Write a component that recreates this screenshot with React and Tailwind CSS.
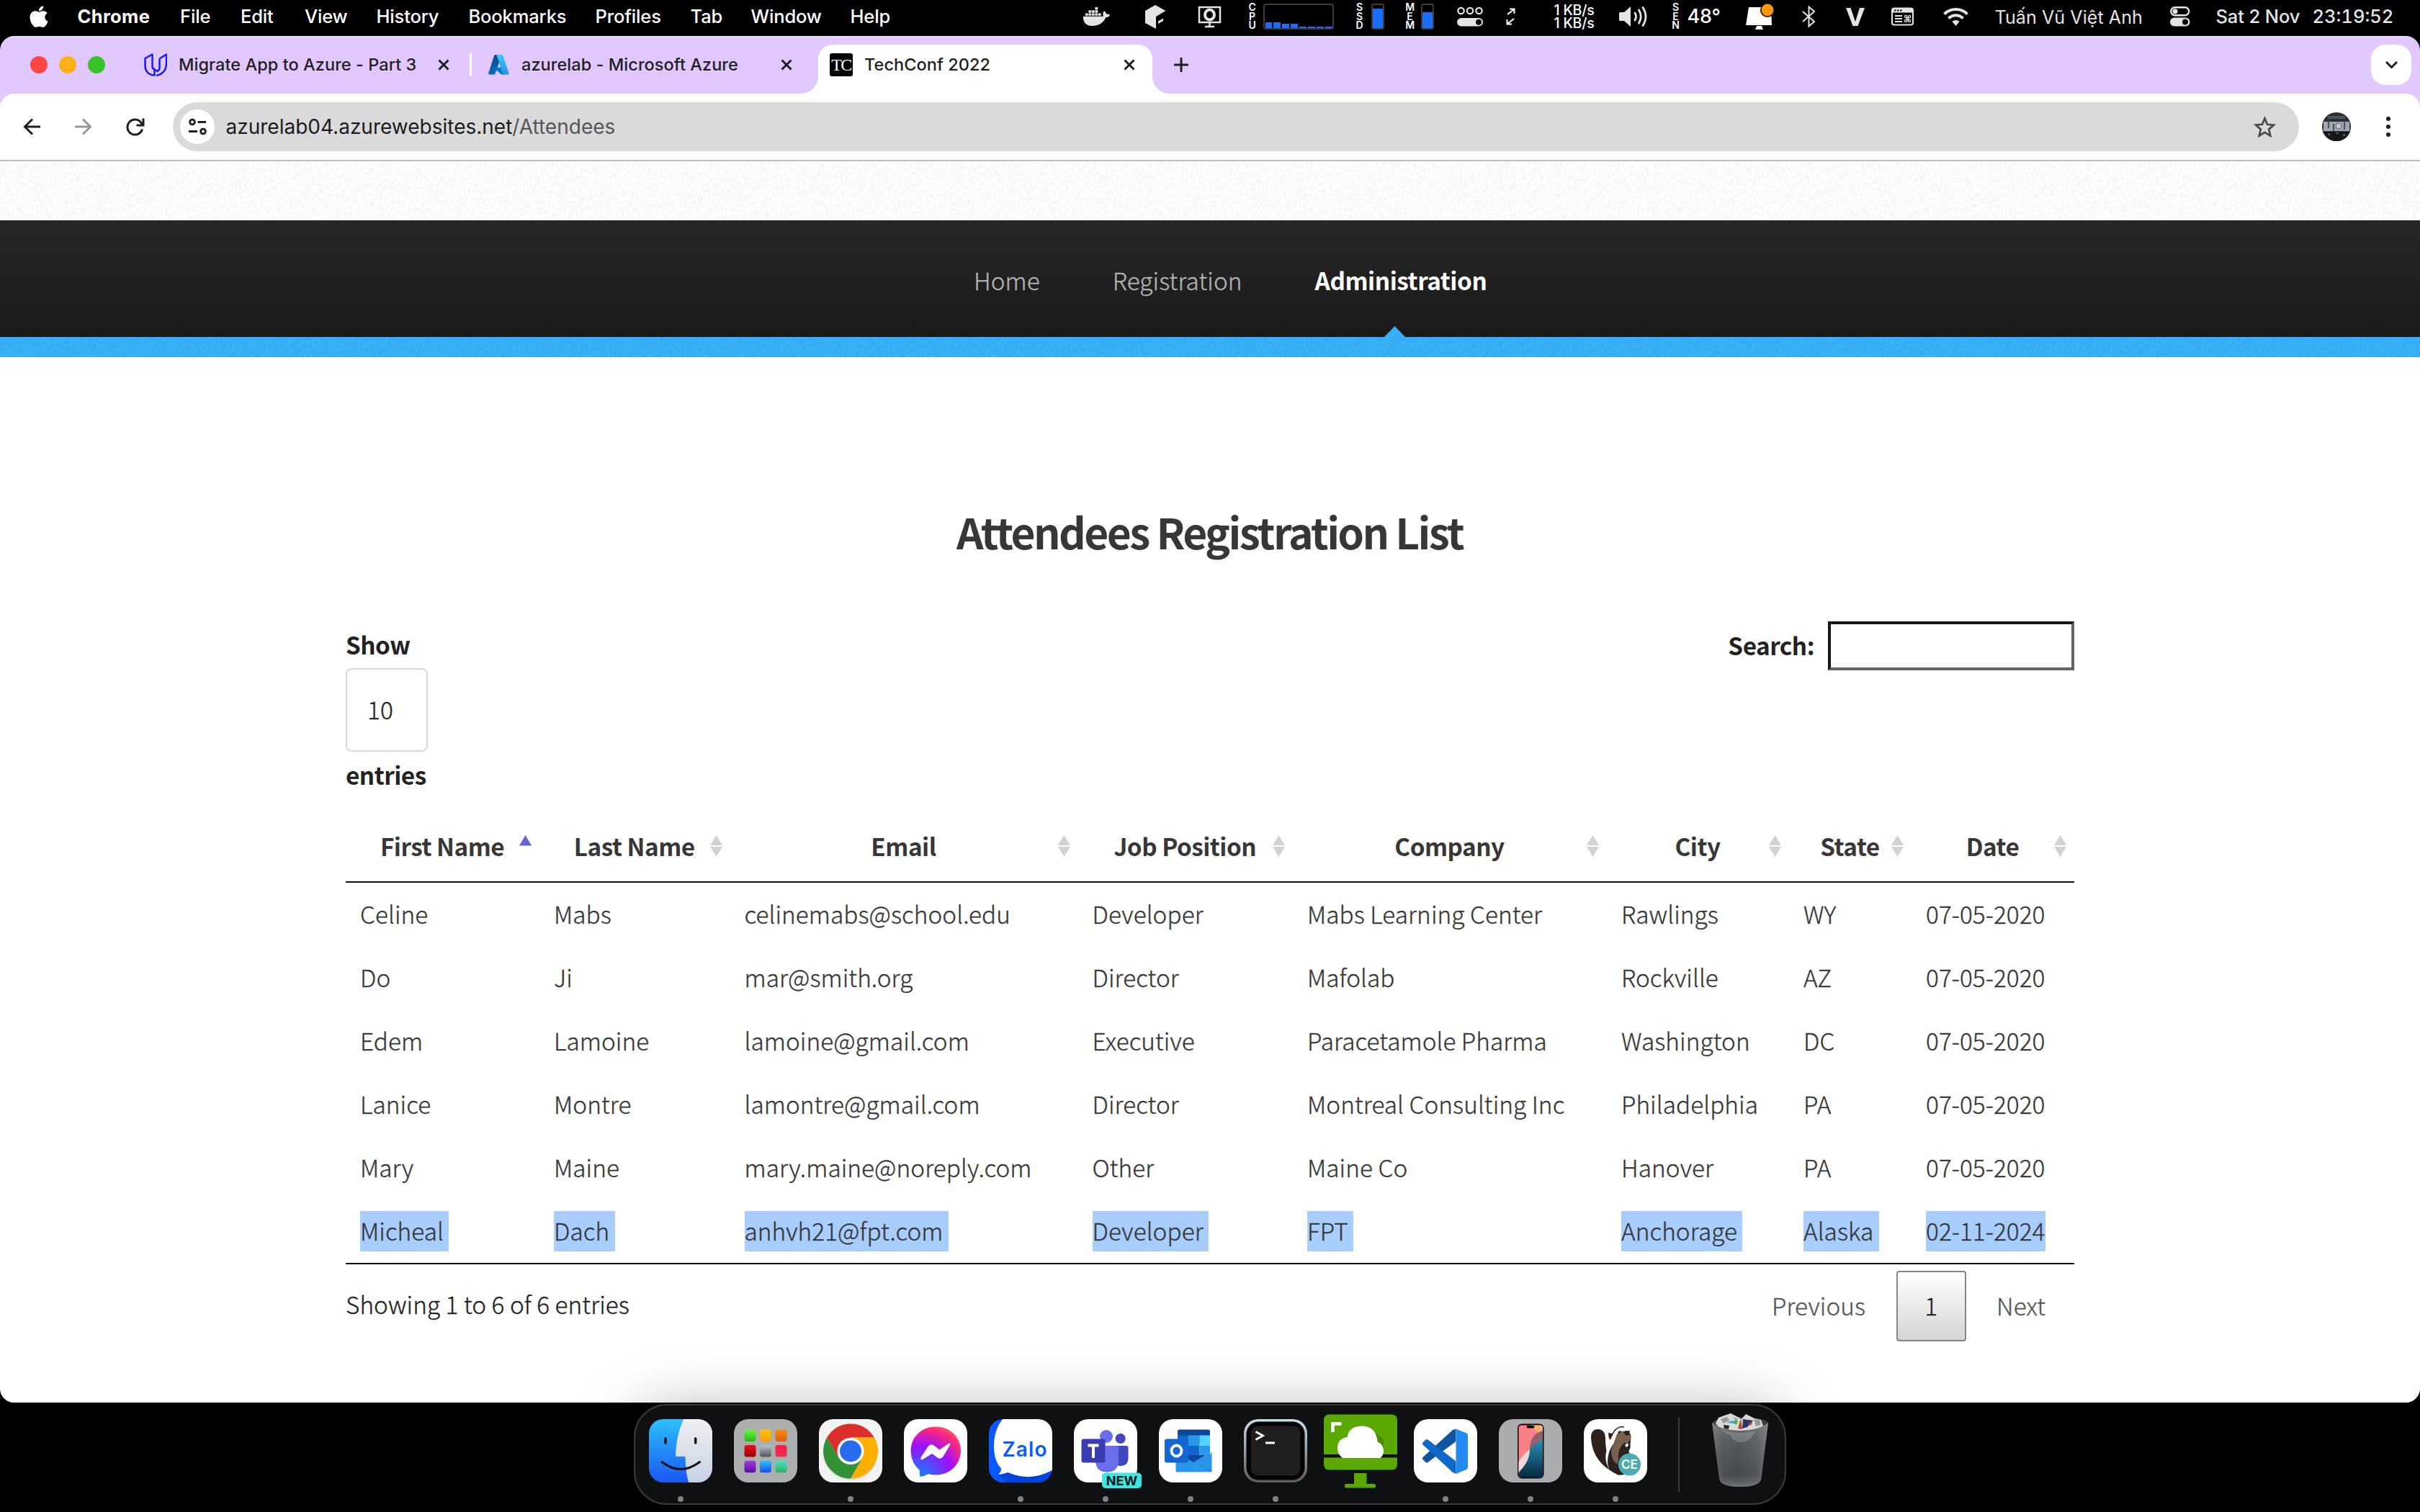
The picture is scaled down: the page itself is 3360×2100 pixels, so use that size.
import { FaApple, FaDocker } from "react-icons/fa";

const COLS = "grid grid-cols-[269px_264.5px_483px_298.5px_436px_253px_170px_226px]";

const columns = ["First Name", "Last Name", "Email", "Job Position", "Company", "City", "State", "Date"];

const rows = [
  ["Celine", "Mabs", "celinemabs@school.edu", "Developer", "Mabs Learning Center", "Rawlings", "WY", "07-05-2020"],
  ["Do", "Ji", "mar@smith.org", "Director", "Mafolab", "Rockville", "AZ", "07-05-2020"],
  ["Edem", "Lamoine", "lamoine@gmail.com", "Executive", "Paracetamole Pharma", "Washington", "DC", "07-05-2020"],
  ["Lanice", "Montre", "lamontre@gmail.com", "Director", "Montreal Consulting Inc", "Philadelphia", "PA", "07-05-2020"],
  ["Mary", "Maine", "mary.maine@noreply.com", "Other", "Maine Co", "Hanover", "PA", "07-05-2020"],
  ["Micheal", "Dach", "anhvh21@fpt.com", "Developer", "FPT", "Anchorage", "Alaska", "02-11-2024"],
];

/* ---------- macOS menu bar ---------- */

function Stacked({ text, className }) {
  return (
    <span className={`flex w-[12px] flex-col items-center text-[14px] leading-[12.5px] font-semibold ${className}`}>
      {text.split("").map((c, i) => (
        <span key={i}>{c}</span>
      ))}
    </span>
  );
}

function Gauge({ level, className }) {
  return (
    <span className={`flex h-[36px] w-[18px] flex-col justify-end rounded-[3px] border-2 border-[#3c3c3e] ${className}`}>
      <span className="block w-full bg-[#1a6dff]" style={{ height: level }} />
    </span>
  );
}

function MenuBar() {
  return (
    <div className="flex h-[50px] shrink-0 items-center bg-black pb-[4px] text-[25.5px] leading-[46px] font-medium tracking-[-0.15px] whitespace-nowrap text-white">
      <FaApple className="ml-[39px] h-[34px] w-[30px]" />
      <span className="ml-[38.5px] w-[142.5px] font-bold tracking-[0.35px]">Chrome</span>
      <span className="w-[84px]">File</span>
      <span className="w-[89px]">Edit</span>
      <span className="w-[99.5px]">View</span>
      <span className="w-[128px]">History</span>
      <span className="w-[176px]">Bookmarks</span>
      <span className="w-[132px]">Profiles</span>
      <span className="w-[84px]">Tab</span>
      <span className="w-[138px]">Window</span>
      <span className="w-[323px]">Help</span>
      <FaDocker className="h-[36px] w-[37px] text-[#e4e4e4]" />
      <svg className="ml-[49px] h-[33px] w-[29px]" viewBox="0 0 29 33">
        <path fill="#e4e4e4" d="M0 8 14 0l14.500 8-13.500 8v17L0 25zM18 26v-3.500l7-4V22z" />
      </svg>
      <svg className="ml-[44px] h-[31px] w-[34px]" viewBox="0 0 34 31" fill="none" stroke="#e4e4e4">
        <path strokeWidth="2.500" d="M2 2h29v21H2zM10 29h13M16.500 23v6" />
        <ellipse cx="16.500" cy="12.500" rx="6.500" ry="7" strokeWidth="4" />
      </svg>
      <Stacked text="CPU" className="ml-[36px]" />
      <span className="ml-[9px] flex h-[36px] w-[98px] items-end gap-[2px] rounded-[4px] border-2 border-[#3c3c3e] pl-px">
        {[8, 8, 6, 6, 2, 2, 2, 2].map((h, i) => (
          <span key={i} className="block w-[10px] bg-[#1a6dff]" style={{ height: h }} />
        ))}
      </span>
      <Stacked text="SSD" className="ml-[30px]" />
      <Gauge level={27} className="ml-[10px]" />
      <Stacked text="MEM" className="ml-[30px]" />
      <Gauge level={22} className="ml-[9px]" />
      <svg className="ml-[32px] h-[28px] w-[37px]" viewBox="0 0 37 28">
        <g fill="none" stroke="#e4e4e4" strokeWidth="2.200">
          <circle cx="5.500" cy="6" r="4.200" />
          <circle cx="18" cy="6" r="4.200" />
          <circle cx="30.500" cy="6" r="4.200" />
        </g>
        <rect y="16" width="36" height="11.500" rx="5.700" fill="#e4e4e4" />
        <circle cx="30" cy="21.700" r="4" fill="#000" />
      </svg>
      <svg className="ml-[31px] h-[24px] w-[13px]" viewBox="0 0 13 24" fill="none" stroke="#fff" strokeWidth="2">
        <path d="M2 9 11 2M5 1.500h6.500V8M11 15l-9 7M8 22.500H1.500V16" />
      </svg>
      <span className="ml-[54px] flex w-[90px] flex-col text-[19.500px] leading-[18px] tracking-[-0.2px]">
        <span>1 KB/s</span>
        <span>1 KB/s</span>
      </span>
      <svg className="h-[30px] w-[41px]" viewBox="0 0 41 30">
        <path fill="#e4e4e4" d="M0 10.500Q0 9 1.500 9H7l9-8v28l-9-8H1.500Q0 21 0 19.500z" />
        <path fill="none" stroke="#e4e4e4" strokeWidth="2.800" strokeLinecap="round" d="M22 10q3 5 0 10M27.500 6q5.500 9 0 18M33 2.500q8 12.500 0 25" />
      </svg>
      <Stacked text="SEN" className="ml-[32px]" />
      <span className="ml-[10px] w-[81px] text-[27px]">48°</span>
      <svg className="h-[36px] w-[40px]" viewBox="0 0 40 36">
        <path fill="#fff" d="M4 5h31l1 25H0zM15 31h7l2 5H13z" />
        <circle cx="30" cy="9" r="10" fill="#000" />
        <circle cx="30" cy="9" r="8.500" fill="#ff9500" />
      </svg>
      <svg className="ml-[38px] h-[30px] w-[19px]" viewBox="0 0 19 30" fill="none" stroke="#e4e4e4" strokeWidth="2">
        <path d="M1 8l16 14-7.500 6.500V1.500L17 8 1 22" />
      </svg>
      <svg className="ml-[42px] h-[26px] w-[26px]" viewBox="0 0 26 26">
        <path fill="#e4e4e4" d="M0 1h6.500L13 20 19 1h7l-9.500 25h-7z" />
      </svg>
      <svg className="ml-[37px] h-[26px] w-[32px]" viewBox="0 0 32 26">
        <rect x="1" y="1.500" width="29" height="23" rx="3" fill="none" stroke="#e4e4e4" strokeWidth="2" />
        <path fill="#e4e4e4" d="M1 2h29v5.500H1z" />
        <path stroke="#000" strokeWidth="2" strokeDasharray="2.500 1.500" d="M4 4.500h11" />
        <path stroke="#e4e4e4" strokeWidth="2" d="M5 12h10M5 16h10M5 20h10" />
        <g fill="none" stroke="#e4e4e4" strokeWidth="1.300">
          <circle cx="20" cy="13" r="1.600" />
          <circle cx="25" cy="13" r="1.600" />
          <circle cx="20" cy="19" r="1.600" />
          <circle cx="25" cy="19" r="1.600" />
          <path d="M21.500 13v6M23.500 13v6M20 14.600h5M20 17.400h5" />
        </g>
      </svg>
      <svg className="ml-[40px] h-[26px] w-[35px]" viewBox="0 0 35 26">
        <g fill="none" stroke="#e4e4e4" strokeWidth="4">
          <path d="M1.500 9.500a23 23 0 0 1 32 0" />
          <path d="M7.500 15.500a14 14 0 0 1 20 0" />
        </g>
        <path fill="#e4e4e4" d="M17.500 26l-5-6a7 7 0 0 1 10 0z" />
      </svg>
      <span className="ml-[37px] w-[243px] pt-[2px] text-[25px] font-normal tracking-[0.1px] text-[#e4e4e4]">Tuấn Vũ Việt Anh</span>
      <svg className="h-[28px] w-[28px]" viewBox="0 0 28 28">
        <rect x="1.200" y="1.200" width="25" height="11" rx="5.500" fill="none" stroke="#e4e4e4" strokeWidth="2.400" />
        <circle cx="7" cy="6.700" r="3.500" fill="#e4e4e4" />
        <rect y="15.500" width="27.500" height="12" rx="6" fill="#e4e4e4" />
        <circle cx="21" cy="21.500" r="4" fill="#000" />
      </svg>
      <span className="ml-[36px] w-[134px] tracking-[-0.1px] text-[#e4e4e4]">Sat 2 Nov</span>
      <span className="tracking-[0px] text-[#e4e4e4] tabular-nums">23:19:52</span>
    </div>
  );
}

/* ---------- Browser chrome ---------- */

function Cross({ className }) {
  return (
    <svg className={`h-[16px] w-[16px] ${className ?? ""}`} viewBox="0 0 16 16" fill="none" stroke="#1f1f1f" strokeWidth="3">
      <path d="M1.500 1.500l13 13M14.500 1.500l-13 13" />
    </svg>
  );
}

function TabStrip() {
  return (
    <div className="flex h-[80px] items-center border-t-2 border-[#ecdcff] pb-[2px] text-[23.5px] font-medium tracking-[0.05px] whitespace-nowrap text-[#1f1f1f]">
      <span className="ml-[42px] h-[24px] w-[24px] rounded-full bg-[#fc4645]" />
      <span className="ml-[16px] h-[24px] w-[24px] rounded-full bg-[#fdb018]" />
      <span className="ml-[16px] h-[24px] w-[24px] rounded-full bg-[#37c42a]" />
      <svg className="ml-[54px] h-[32px] w-[32px]" viewBox="0 0 32 32" fill="none" stroke="#1414ff" strokeWidth="2.400" strokeLinejoin="round">
        <path d="M11 2v17q0 3 3 3.500v8.500Q1 30 1 17V7.500z" transform="translate(.5 -.5)" />
        <path d="M21.500 7.500 31 1.500V14q0 14-14 17M21.500 7.500V20q0 3.500-3 5l-4-2.500" />
      </svg>
      <span className="ml-[16px] w-[360px]">Migrate App to Azure - Part 3</span>
      <Cross />
      <span className="ml-[28px] h-[32px] w-[3px] bg-white" />
      <svg className="ml-[23px] h-[28px] w-[29px]" viewBox="0 0 29 28">
        <defs>
          <linearGradient id="azL" x1="0" y1="0" x2="0" y2="1">
            <stop offset="0" stopColor="#114a8b" />
            <stop offset="1" stopColor="#0669bc" />
          </linearGradient>
          <linearGradient id="azR" x1="0" y1="0" x2="0" y2="1">
            <stop offset="0" stopColor="#3ccbf4" />
            <stop offset="1" stopColor="#2892df" />
          </linearGradient>
        </defs>
        <path fill="url(#azL)" d="M9.500 0H19L9 27.500H1.500Q-.300 27 .200 25.500L8.200 1z" />
        <path fill="#0078d4" d="M9 17.500h13l1 10h-4.500L8 19z" />
        <path fill="url(#azR)" d="M10.500 0h8q1.300 0 1.800 1.200l8.200 24.600q.300 1.500-1.400 1.700H18q2-.5 1.500-2.200L11.800 1Q11.300 0 10.500 0z" />
      </svg>
      <span className="ml-[17px] w-[360px]">azurelab - Microsoft Azure</span>
      <Cross />
      <div className="relative -mb-[2px] ml-[36px] flex h-[68px] w-[464px] items-center self-end rounded-t-[20px] bg-white pb-[12px] pl-[16px]">
        <svg className="absolute bottom-0 -left-[24px] h-[24px] w-[24px]" viewBox="0 0 24 24">
          <path fill="#fff" d="M24 0v24H0A24 24 0 0 0 24 0z" />
        </svg>
        <svg className="absolute -right-[24px] bottom-0 h-[24px] w-[24px]" viewBox="0 0 24 24">
          <path fill="#fff" d="M0 0v24h24A24 24 0 0 1 0 0z" />
        </svg>
        <span className="flex h-[32px] w-[32px] items-center justify-center rounded-[3px] bg-black font-['Liberation_Serif'] text-[24px] leading-none tracking-[-1.500px] text-white">
          TC
        </span>
        <span className="ml-[16px] w-[360px]">TechConf 2022</span>
        <Cross />
      </div>
      <svg className="ml-[30px] h-[20px] w-[20px]" viewBox="0 0 20 20" stroke="#1f1f1f" strokeWidth="3">
        <path d="M10 0v20M0 10h20" />
      </svg>
      <span className="mr-[12px] ml-auto flex h-[56px] w-[56px] items-center justify-center rounded-[20px] bg-white">
        <svg className="h-[10px] w-[17px]" viewBox="0 0 17 10" fill="none" stroke="#1f1f1f" strokeWidth="3">
          <path d="M1 1l7.500 7.500L16 1" />
        </svg>
      </span>
    </div>
  );
}

function Toolbar() {
  return (
    <div className="flex h-[94px] items-center rounded-t-[20px] border-b-2 border-[#bdbdbd] bg-white">
      <svg className="ml-[32px] h-[24px] w-[24px]" viewBox="0 0 24 24" fill="none" stroke="#1f1f1f" strokeWidth="3">
        <path d="M24 12H3M13 1.500 2.500 12 13 22.500" />
      </svg>
      <svg className="ml-[48px] h-[24px] w-[24px]" viewBox="0 0 24 24" fill="none" stroke="#979797" strokeWidth="3">
        <path d="M0 12h21M11 1.500 21.500 12 11 22.500" />
      </svg>
      <svg className="ml-[47px] h-[25px] w-[26px]" viewBox="0 0 26 25" fill="none" stroke="#1f1f1f" strokeWidth="3">
        <path d="M22.500 15.500A10.500 10.500 0 1 1 21 6.500l2.500 2.500M24 .5V10h-9.500" />
      </svg>
      <div className="ml-[39px] flex h-[68px] w-[2952px] items-center rounded-full bg-[#dadada] pl-[10px] text-[28px] whitespace-nowrap text-[#1b1c1f]">
        <span className="flex h-[48px] w-[48px] items-center justify-center rounded-full bg-white">
          <svg className="h-[24px] w-[25px]" viewBox="0 0 25 24" fill="none" stroke="#1f1f1f" strokeWidth="2.800">
            <circle cx="5" cy="5.500" r="3.400" />
            <path d="M12.500 5.500H24M0 18.500h12" />
            <circle cx="20" cy="18.500" r="3.400" />
          </svg>
        </span>
        <span className="ml-[15.500px]">azurelab04.azurewebsites.net</span>
        <span className="text-[#55565a]">/Attendees</span>
        <svg className="mr-[32px] ml-auto h-[30px] w-[31px]" viewBox="0 0 31 30" fill="none" stroke="#4a4c50" strokeWidth="2.800">
          <path d="M15.500 3.500l3.500 8.300 9 .8-6.800 6 2 8.900-7.700-4.700-7.700 4.700 2-8.900-6.800-6 9-.8z" />
        </svg>
      </div>
      <svg className="ml-[32px] h-[40px] w-[40px]" viewBox="0 0 40 40">
        <defs>
          <clipPath id="avatarClip">
            <circle cx="20" cy="20" r="20" />
          </clipPath>
        </defs>
        <g clipPath="url(#avatarClip)">
          <path fill="#2b3036" d="M0 0h40v40H0z" />
          <path fill="#4c545c" d="M8 5h24v4H8z" />
          <path fill="#a0a6b0" d="M2 13h36v13H2z" />
          <path fill="#4a4f58" d="M8 12h2v10H8zM15 16h2v12h-2zM30 12h2v12h-2z" />
          <circle cx="23" cy="19" r="4" fill="#c5c8d0" stroke="#656b76" />
          <path fill="#14171a" d="M0 27h40v13H0z" />
          <path fill="#50565c" d="M8 29h3v3H8zM19 28h4v2h-4zM29 30h3v3h-3z" />
        </g>
      </svg>
      <svg className="ml-[49px] h-[28px] w-[6px]" viewBox="0 0 6 28" fill="#1f1f1f">
        <circle cx="3" cy="3" r="3" />
        <circle cx="3" cy="14" r="3" />
        <circle cx="3" cy="25" r="3" />
      </svg>
    </div>
  );
}

/* ---------- Page ---------- */

function Grain({ id, className }) {
  return (
    <svg className={`absolute inset-0 h-full w-full ${className}`}>
      <filter id={id} x="0" y="0" width="100%" height="100%">
        <feTurbulence type="fractalNoise" baseFrequency="0.3 0.2" numOctaves="3" />
        <feColorMatrix values="0 0 0 0 0  0 0 0 0 0  0 0 0 0 0  1.4 0 0 0 -0.4" />
      </filter>
      <rect width="100%" height="100%" filter={`url(#${id})`} />
    </svg>
  );
}

function SortIcon({ active }) {
  if (active) {
    return (
      <svg className="h-[30px] w-[17px]" viewBox="0 0 17 30">
        <path fill="#6366d8" d="M8.500 0 17 14.500H0z" />
      </svg>
    );
  }
  return (
    <svg className="h-[30px] w-[17px]" viewBox="0 0 17 30" fill="#d2d2d2">
      <path d="M8.500 0 17 14H0zM0 16h17L8.500 30z" />
    </svg>
  );
}

const LIGHT = "font-light tracking-[0.08px] [-webkit-text-stroke:0.35px_currentColor]";

function Page() {
  return (
    <div className="flex-1 bg-white font-['Noto_Sans_CJK_JP','Noto_Sans',sans-serif] text-[33.3px] whitespace-nowrap text-[#373737]">
      <div className="relative h-[82px] bg-white">
        <Grain id="grainTop" className="opacity-[0.055]" />
      </div>
      <nav className="flex h-[162px] items-stretch bg-linear-to-b from-[#272727] to-[#1a1a1a] pl-[1352px] leading-[165px] text-[#b3b3b3]">
        <a className={LIGHT}>Home</a>
        <a className={`ml-[101px] ${LIGHT}`}>Registration</a>
        <a className="relative ml-[101px] font-bold tracking-[-0.45px] text-white">
          Administration
          <svg className="absolute bottom-0 left-[96px] h-[15px] w-[29px]" viewBox="0 0 29 15">
            <path fill="#38aff8" d="M14.500 0 29 15H0z" />
          </svg>
        </a>
      </nav>
      <div className="relative h-[28px] bg-[#3ab2fb]">
        <Grain id="grainBlue" className="opacity-[0.07]" />
      </div>

      <main className="mx-auto w-[2400px]">
        <h2 className="pt-[202px] pr-px text-center text-[58.7px] leading-[80px] font-bold tracking-[-2.6px]">Attendees Registration List</h2>

        <div className="mt-[85px] flex justify-between font-bold tracking-[-0.5px] text-[#222]">
          <div className="flex flex-col items-start leading-[63px]">
            <span className="h-[65px]">Show</span>
            <span className={`h-[116px] w-[114px] rounded-[8px] border-2 border-[#d9d9d9] pl-[28px] leading-[109px] text-[#222] ${LIGHT}`}>10</span>
            <span>entries</span>
          </div>
          <div className="flex h-[68px] leading-[65px]">
            <span>Search:</span>
            <span className="ml-[19px] h-[68px] w-[342px] border-4 border-t-[#171717] border-r-[#636363] border-b-[#636363] border-l-[#171717] bg-white" />
          </div>
        </div>

        <div className={`${COLS} h-[119px] border-b-2 border-[#111] pt-[19px]`}>
          {columns.map((c, i) => (
            <div key={c} className="flex items-center pr-[11px] pl-[27px]">
              <span className="flex-1 text-center leading-[98px] font-bold tracking-[-0.5px]">{c}</span>
              <SortIcon active={i === 0} />
            </div>
          ))}
        </div>

        <div className={`border-b-2 border-[#111] ${LIGHT}`}>
          {rows.map((r, ri) => (
            <div key={r[0]} className={`${COLS} h-[88px] items-center`}>
              {r.map((v, i) => (
                <div key={i} className="pl-[20px]">
                  <span
                    className={`inline-block h-[56px] align-top leading-[53px] ${ri === 5 ? "bg-[#a8cdff]" : ""} ${ri === 5 && i < 7 ? "pr-[7.500px]" : ""}`}
                  >
                    {v}
                  </span>
                </div>
              ))}
            </div>
          ))}
        </div>

        <div className={`mt-[9px] flex h-[98px] text-[#222] ${LIGHT}`}>
          <span className="leading-[91px]">Showing 1 to 6 of 6 entries</span>
          <div className="mr-[40px] ml-auto flex leading-[95px] text-[#555]">
            <span>Previous</span>
            <span className="ml-[43px] h-[98px] w-[97px] rounded-[4px] border-2 border-[#868686] bg-linear-to-b from-white to-[#d5d5d5] pr-px text-center leading-[91px] text-[#222]">
              1
            </span>
            <span className="ml-[42px]">Next</span>
          </div>
        </div>
      </main>
    </div>
  );
}

/* ---------- Dock ---------- */

function Tile({ fill = "#fff" }) {
  return <rect x="0" y="0" width="88" height="88" rx="20" fill={fill} />;
}

function Finder() {
  return (
    <>
      <defs>
        <linearGradient id="fiB" x1="0" y1="0" x2="0" y2="1">
          <stop offset="0" stopColor="#2cc0fd" />
          <stop offset="1" stopColor="#1a57f2" />
        </linearGradient>
        <linearGradient id="fiW" x1="0" y1="0" x2="0" y2="1">
          <stop offset="0" stopColor="#f0eff1" />
          <stop offset="1" stopColor="#c6d2e4" />
        </linearGradient>
      </defs>
      <Tile fill="url(#fiB)" />
      <path fill="url(#fiW)" d="M48 0h20a20 20 0 0 1 20 20v48a20 20 0 0 1-20 20H55q-4-13-4.500-36H39q-2 0-2-2.500Q38 22 48 0z" />
      <g fill="none" stroke="#101010" strokeLinecap="round">
        <path strokeWidth="3.500" d="M23 27v6M64.700 27v6" />
        <path strokeWidth="3" d="M18 59.500q26 20 52.500 0" />
      </g>
    </>
  );
}

const launchpadColors = [
  ["#6cf84a", "#27b80c"],
  ["#fdc60c", "#f89c08"],
  ["#f68f0a", "#e05c12"],
  ["#ea0d1a", "#930404"],
  ["#b4c4cc", "#555"],
  ["#fb1a44", "#ea3454"],
  ["#a63ce0", "#5b0f9e"],
  ["#2cc4fc", "#174cf0"],
  ["#58dcc8", "#2cb060"],
];

function Launchpad() {
  return (
    <>
      <Tile fill="#adaeb0" />
      {launchpadColors.map(([a, b], i) => (
        <g key={a}>
          <linearGradient id={`lp${i}`} x1="0" y1="0" x2="0" y2="1">
            <stop offset="0" stopColor={a} />
            <stop offset="1" stopColor={b} />
          </linearGradient>
          <rect x={14.500 + (i % 3) * 21.500} y={14.500 + Math.floor(i / 3) * 21.600} width="16" height="16.500" rx="3.500" fill={`url(#lp${i})`} />
        </g>
      ))}
    </>
  );
}

function ChromeIcon() {
  return (
    <>
      <Tile fill="#f3f3f3" />
      <ellipse cx="44" cy="49" rx="37" ry="36" fill="#000" opacity=".1" />
      <g transform="translate(44 44.500)">
        <path fill="#dc2e2b" d="M32.900-19H0L-16.450 9.500-32.900-19A38 38 0 0 1 32.900-19z" />
        <path fill="#329238" d="M-32.900-19-16.450 9.500 16.450 9.500 0 38A38 38 0 0 1-32.900-19z" />
        <path fill="#f9b000" d="M0 38 16.450 9.500 0-19H32.900A38 38 0 0 1 0 38z" />
        <circle r="18.600" fill="#fff" />
        <circle r="15" fill="#2a6cf0" />
      </g>
    </>
  );
}

function Messenger() {
  return (
    <>
      <radialGradient id="msg" cx=".2" cy="1" r="1.150">
        <stop offset="0" stopColor="#0a84ff" />
        <stop offset=".55" stopColor="#a10eff" />
        <stop offset=".85" stopColor="#ff2a78" />
        <stop offset="1" stopColor="#ff6a58" />
      </radialGradient>
      <Tile />
      <path fill="url(#msg)" d="M44.300 10.500c20 0 34.700 14.500 34.700 33.300S64.300 77.500 44.300 77.500q-5.500 0-10-1.300l-9.300 3.500q-2.700.8-3-2l-.3-7C14 64.500 9.600 55 9.600 43.800 9.600 25 24.300 10.500 44.300 10.500z" />
      <path fill="#fff" d="M23.500 53.500 33.500 38q3.500-4.500 8-1.500l8 6 12.500-8.500q3-1.500 2.200 1.500L54.500 52q-3.500 4.500-8 1.500L39 48l-13 8q-3.500 1-2.500-2.500z" />
    </>
  );
}

function Zalo() {
  return (
    <>
      <clipPath id="zaClip">
        <rect width="88" height="88" rx="20" />
      </clipPath>
      <g clipPath="url(#zaClip)">
        <path fill="#0a58ff" d="M0 0h88v88H0z" />
        <path fill="#0442e0" d="M14 77 88 62v26H24z" />
        <path fill="#fff" d="M20-1Q7 14 7 38q0 20 10 30.500.5 5-3.500 7.500 0 1.500 7-.3l6-1.700Q58 88 90 70V-1z" />
      </g>
      <text x="18.500" y="52" fontSize="28" fontWeight="600" textLength="62" fill="#0a5cff">
        Zalo
      </text>
    </>
  );
}

function Teams() {
  return (
    <>
      <Tile />
      <circle cx="64.700" cy="27" r="7" fill="#4246c0" />
      <path fill="#4246c0" d="M56 37h17q2.500 0 2.500 2.500V54q0 11-11 11-6 0-8.500-4z" />
      <circle cx="45" cy="24" r="9" fill="#6a6eea" />
      <path fill="#6a6eea" d="M30 37h29.500q2.500 0 2.500 2.500V57q0 16.500-16 16.500T30 57z" />
      <rect x="10.500" y="27.500" width="33" height="33" rx="3" fill="#3a3cb4" />
      <path fill="none" stroke="#fff" strokeWidth="4" d="M19.500 36.500h15M27 36v18" />
      <rect x="39" y="74.500" width="55" height="21.500" rx="5" fill="#3de6e2" />
      <text x="66.500" y="92" fontSize="18" fontWeight="700" textAnchor="middle" fill="#04181a">
        NEW
      </text>
    </>
  );
}

function Outlook() {
  return (
    <>
      <Tile />
      <rect x="26" y="14.500" width="45" height="20" rx="2.500" fill="#0f4699" />
      <path fill="#1263cc" d="M26 22.500h14.500V50H26z" />
      <path fill="#2b97ea" d="M40.500 22.500h16V37h-16z" />
      <path fill="#50d6ff" d="M56.500 22.500H71V37H56.500z" />
      <path fill="#1263cc" d="M40.500 37h16v14h-16z" />
      <path fill="#2b97ea" d="M56.500 37H71v14H56.500z" />
      <path fill="#2a96e8" d="M23.500 50h47.500l2.500-5v26.500q0 2-2 2h-46q-2 0-2-2z" />
      <path fill="#0f4699" d="M32 50h32L48 60z" />
      <path fill="#1d7fdc" d="M47 59 73.500 73.500V72z" />
      <rect x="8" y="27.500" width="33" height="33" rx="3" fill="#1467d2" />
      <ellipse cx="24.500" cy="44" rx="7" ry="7.500" fill="none" stroke="#fff" strokeWidth="3.800" />
    </>
  );
}

function Terminal() {
  return (
    <>
      <linearGradient id="tmF" x1="0" y1="0" x2="0" y2="1">
        <stop offset="0" stopColor="#c6dfe9" />
        <stop offset="1" stopColor="#5c5a5c" />
      </linearGradient>
      <Tile fill="url(#tmF)" />
      <rect x="3.500" y="3.500" width="81" height="81" rx="17" fill="#050203" />
      <rect x="10" y="9.500" width="68.500" height="69" rx="10" fill="#1f1f20" />
      <path fill="none" stroke="#fff" strokeWidth="2.800" d="M16.500 17.500 26.500 23l-10 5.500M30 33h13" />
    </>
  );
}

function RemoteDesktop() {
  return (
    <g transform="translate(-7 -6.500)">
      <path fill="#5aa802" d="M8 0h86q8 0 8 8v47.500H0V8q0-8 8-8zM0 60h102v9q0 8-8 8H8q-8 0-8-8zM42 81.500h17.500V98H42z" />
      <rect x="29" y="96.500" width="43" height="5.500" rx="2" fill="#5aa802" />
      <path fill="#4a8c02" d="M70 24 83 35v14L70 44z" />
      <path fill="none" stroke="#fff" strokeWidth="4.500" d="M12.500 24.500V13h12" />
      <path fill="#fff" d="M26 60.500q-7-5-7-14 0-13 13.500-15Q35 16 53.500 16 73 17 74.500 38q8.500 3.500 8.500 12.500 0 6-4.500 10z" />
    </g>
  );
}

function VSCode() {
  return (
    <>
      <Tile />
      <path fill="#1055a0" d="M58.500 13.500V31L19.500 60q-1.500 1-3 0L12.500 56q-1.500-1.500 0-3L54 15z" />
      <path fill="#1268c8" d="M58.500 76V58.500L19.500 28.500q-1.500-1-3 0L12.500 32.500q-1.500 1.500 0 3L54 74z" />
      <path fill="#2489f0" d="M58.500 13.500 73 19.500q2 1 2 3V67q0 2-2 3L58.500 76z" />
    </>
  );
}

function Phone() {
  return (
    <>
      <defs>
        <linearGradient id="phB" x1="0" y1="0" x2="0" y2="1">
          <stop offset="0" stopColor="#2a92b4" />
          <stop offset="1" stopColor="#042640" />
        </linearGradient>
        <clipPath id="phC">
          <rect x="27.500" y="8.500" width="33.500" height="72.500" rx="4" />
        </clipPath>
      </defs>
      <Tile fill="#abacae" />
      <rect x="26" y="6.500" width="36.500" height="76" rx="6" fill="#070707" />
      <g clipPath="url(#phC)">
        <path fill="#fb7f84" d="M27 8h35v74H27z" />
        <path fill="#fbb070" d="M45 8h17v10Q50 20 45 8z" />
        <path fill="#8c6474" d="M43 42Q43 20 62 16v16z" />
        <path fill="url(#phB)" d="M27 76Q38 60 43 42 50 34 62 28v54H27z" />
        <path fill="#ecd8dc" d="M27 60Q36 46 43 42q0 18-16 32z" />
      </g>
      <rect x="38.500" y="9" width="11" height="3.500" rx="1.700" fill="#000" />
    </>
  );
}

function DBeaver() {
  return (
    <>
      <Tile />
      <path fill="#2c211d" d="M10 26q0-12 9.500-12Q30 14 30 28q0 12 3 22 5 14 16 28Q12 62 10 26z" />
      <path fill="#2c211d" d="M33 50q0-12 6-20l4-8 16-6q6 2 6.500 8l-1 12q1 4-2 8 4 12 2 26-8 10-18 7Q32 70 33 50z" />
      <path fill="#2c211d" d="M34 19l6 1 1 3-6 5z" />
      <path fill="none" stroke="#2c211d" strokeWidth="1.500" d="M37 29Q42 9 56 11M34 44q1-10 7-18" />
      <path fill="#fff" d="M39 24q6-11 16-9-8 2-10 9l-3 9q-9 12-9 26 0 8 5 16Q28 60 31 46z" />
      <path fill="#7a6050" d="M47 19q9-5 17 1l1 7q-3 8-9 6-9 8-8 22l-1 8q-9-6-9-18 1-7 4-11z" />
      <path fill="#2c211d" d="M55 17l9-1-1 6-5 1zM48 20q4-1 4-4l-4 1z" />
      <path fill="#fff" d="M57 36l4-3 1 4-3 2z" />
      <circle cx="63.500" cy="63" r="15.500" fill="#4cacb2" />
      <text x="63.500" y="69" fontSize="17" fontWeight="600" textAnchor="middle" fill="#fff">
        CE
      </text>
    </>
  );
}

function Trash() {
  return (
    <svg className="ml-[45px] h-[102px] w-[78px] -translate-y-[8px] overflow-visible" viewBox="0 0 78 102">
      <defs>
        <linearGradient id="trB" x1="0" y1="0" x2="1" y2="0">
          <stop offset="0" stopColor="#6d7274" />
          <stop offset=".2" stopColor="#55595b" />
          <stop offset=".5" stopColor="#4c5052" />
          <stop offset=".8" stopColor="#5c6062" />
          <stop offset="1" stopColor="#7e8284" />
        </linearGradient>
        <linearGradient id="trS" x1="0" y1="0" x2="0" y2="1">
          <stop offset="0" stopColor="#8c9092" stopOpacity=".55" />
          <stop offset=".3" stopColor="#6a6e70" stopOpacity=".3" />
          <stop offset=".8" stopColor="#303436" stopOpacity=".2" />
          <stop offset="1" stopColor="#9a9ea2" stopOpacity=".5" />
        </linearGradient>
      </defs>
      <ellipse cx="39" cy="14" rx="39" ry="9" fill="#3a3d3f" />
      <path fill="#d8d8d6" d="M5 14 9 6l8-3 9-3 10 5 5 3 6-7 12 6 9 2 3 8-7 8H14z" />
      <path fill="#9a9a98" d="M12 8l8-3 5 4-9 5zM58 8l8 1 2 7-7 2zM30 5l6 3-4 3z" />
      <path fill="#3cb43c" d="M26 11l10-1-2 6z" />
      <path fill="#38a8e0" d="M20 13l8-3 4 4z" />
      <path fill="#34306a" d="M43 8l14 2-8 9-7 2z" />
      <path fill="#b04428" d="M38 14l2-6 2 14-6-1zM50 14l6-2-2 5z" />
      <path fill="#2a2826" d="M16 16l8 1-1 5-6-1z" />
      <path fill="url(#trB)" d="M0 13q14 11 39 11t39-11l-9.500 77q-1 12-29.500 12T10 90z" />
      <path fill="url(#trS)" d="M0 13q14 11 39 11t39-11l-9.500 77q-1 12-29.500 12T10 90z" />
      <path fill="#a4a8aa" opacity=".4" d="M12 22q20 8 48 3-8 16-22 15-12-3-12-10-9-2-14-8z" />
    </svg>
  );
}

const dockApps = [
  [Finder, true],
  [Launchpad, false],
  [ChromeIcon, true],
  [Messenger, false],
  [Zalo, true],
  [Teams, true],
  [Outlook, true],
  [Terminal, true],
  [RemoteDesktop, false],
  [VSCode, true],
  [Phone, true],
  [DBeaver, true],
];

function Dock() {
  return (
    <div className="relative mx-auto mt-[2px] flex h-[140px] w-[1600px] rounded-[46px] border-2 border-[#38393a] bg-[#0f1012] pt-[18.5px] pl-[19px] shadow-[0_10px_90px_-4px_rgba(0,0,0,0.35)]">
      <div className="flex gap-[30px]">
        {dockApps.map(([Icon, running], i) => (
          <div key={i} className="flex w-[88px] flex-col items-center">
            <svg className="h-[88px] w-[88px] overflow-visible font-['Inter']" viewBox="0 0 88 88">
              <Icon />
            </svg>
            {running && <span className="mt-[19px] h-[8px] w-[8px] rounded-full bg-[#828284]" />}
          </div>
        ))}
      </div>
      <span className="-mt-[2px] ml-[43px] h-[104px] w-[2px] bg-[#3a3b3d]" />
      <Trash />
    </div>
  );
}

export default function App() {
  return (
    <div className="flex h-[2100px] w-[3360px] flex-col overflow-hidden bg-black font-['Inter','Noto_Sans',sans-serif]">
      <MenuBar />
      <div className="flex h-[1898px] shrink-0 flex-col overflow-hidden rounded-[20px] bg-[#e1c8ff]">
        <TabStrip />
        <Toolbar />
        <Page />
      </div>
      <Dock />
    </div>
  );
}
